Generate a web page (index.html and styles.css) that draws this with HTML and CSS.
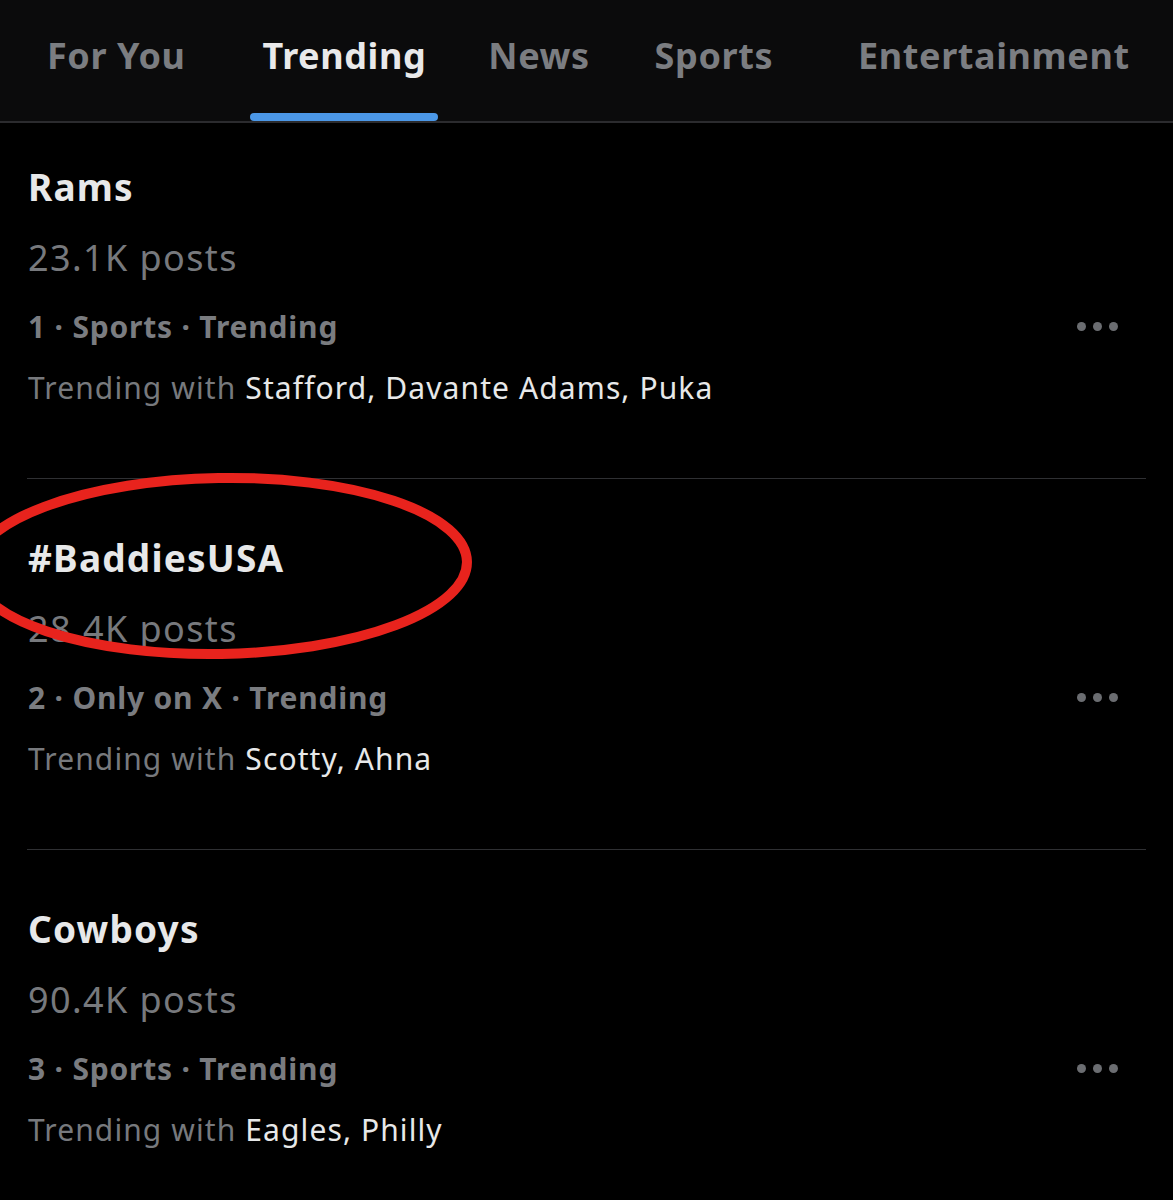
FILE: index.html
```html
<!DOCTYPE html>
<html>
<head>
<meta charset="utf-8">
<link rel="stylesheet" href="styles.css">
</head>
<body>
<div class="page">
  <nav class="tabs">
    <div class="tab t1">For You</div>
    <div class="tab t2 active">Trending<span class="bar"></span></div>
    <div class="tab t3">News</div>
    <div class="tab t4">Sports</div>
    <div class="tab t5">Entertainment</div>
  </nav>
  <main class="list">
    <section class="trend first">
      <div class="title">Rams</div>
      <div class="posts">23.1K posts</div>
      <div class="meta-row">
        <div class="meta">1 · Sports · Trending</div>
        <div class="more"><span></span><span></span><span></span></div>
      </div>
      <div class="with">Trending with <span class="names">Stafford, Davante Adams, Puka</span></div>
    </section>
    <section class="trend">
      <div class="title">#BaddiesUSA</div>
      <div class="posts">28.4K posts</div>
      <div class="meta-row">
        <div class="meta">2 · Only on X · Trending</div>
        <div class="more"><span></span><span></span><span></span></div>
      </div>
      <div class="with">Trending with <span class="names">Scotty, Ahna</span></div>
      <svg class="circle" width="540" height="230" viewBox="0 0 540 230">
        <ellipse cx="253" cy="107" rx="247" ry="88" transform="rotate(-1 253 107)" fill="none" stroke="#e8231d" stroke-width="10"/>
      </svg>
    </section>
    <section class="trend last">
      <div class="title">Cowboys</div>
      <div class="posts">90.4K posts</div>
      <div class="meta-row">
        <div class="meta">3 · Sports · Trending</div>
        <div class="more"><span></span><span></span><span></span></div>
      </div>
      <div class="with">Trending with <span class="names">Eagles, Philly</span></div>
    </section>
  </main>
</div>
</body>
</html>
```
FILE: styles.css
```css
html, body {
  margin: 0;
  padding: 0;
  background: #000;
}
.page {
  width: 1173px;
  height: 1200px;
  overflow: hidden;
  background: #000;
  font-family: "Noto Sans", "Open Sans", sans-serif;
}
.tabs {
  height: 123px;
  background: #0b0b0c;
  border-bottom: 2px solid #2b2b2e;
  display: flex;
  align-items: flex-start;
  box-sizing: border-box;
}
.tab {
  position: relative;
  font-size: 36px;
  font-weight: 700;
  color: #7b7d81;
  padding-top: 31px;
  line-height: 50px;
  letter-spacing: 0.6px;
}
.tab.active { color: #e9e9ea; }
.t1 { margin-left: 47px; }
.t2 { margin-left: 77px; }
.t3 { margin-left: 62px; }
.t4 { margin-left: 65px; }
.t5 { margin-left: 85px; }
.bar {
  position: absolute;
  left: -13px;
  right: -12px;
  top: 113px;
  height: 8px;
  border-radius: 4px;
  background: #4b97e6;
}
.list {
  padding: 0 27px;
}
.trend {
  position: relative;
  border-bottom: 1px solid #2f3033;
  padding-top: 57px;
  padding-bottom: 68px;
}
.trend.first { padding-top: 42px; }
.trend.last { border-bottom: none; }
.title {
  font-size: 37px;
  font-weight: 700;
  color: #e7e8e9;
  line-height: 44px;
  letter-spacing: 1.2px;
  margin-left: 1px;
}
.posts {
  font-size: 36px;
  color: #77797d;
  line-height: 44px;
  letter-spacing: 1.4px;
  margin-top: 27px;
  margin-left: 1px;
}
.meta-row {
  display: flex;
  align-items: center;
  justify-content: space-between;
  margin-top: 24px;
  height: 44px;
}
.meta {
  font-size: 30px;
  font-weight: 700;
  color: #7a7c80;
  letter-spacing: 0.8px;
  margin-left: 1px;
}
.more {
  display: flex;
  gap: 7px;
  margin-right: 28px;
}
.more span {
  width: 9px;
  height: 9px;
  border-radius: 50%;
  background: #6b6d71;
}
.with {
  font-size: 30px;
  color: #77797d;
  line-height: 44px;
  letter-spacing: 1.1px;
  margin-top: 18px;
  margin-left: 1px;
}
.names { color: #e7e8e9; }
.circle {
  position: absolute;
  left: -60px;
  top: -20px;
}
```
